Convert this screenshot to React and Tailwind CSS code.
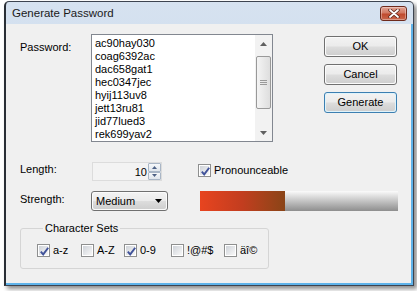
import React from 'react';

const passwords = [
  'ac90hay030',
  'coag6392ac',
  'dac658gat1',
  'hec0347jec',
  'hyij113uv8',
  'jett13ru81',
  'jid77lued3',
  'rek699yav2',
];

const charSets = [
  { label: 'a-z', checked: true, w: 'w-[44px]' },
  { label: 'A-Z', checked: false, w: 'w-[43px]' },
  { label: '0-9', checked: true, w: 'w-[47px]' },
  { label: '!@#$', checked: false, w: 'w-[53px]' },
  { label: 'äî©', checked: false, w: 'w-[40px]' },
];

const Check = ({ checked }) => (
  <span className="w-[13px] h-[13px] shrink-0 border border-[#8e8f8f] bg-white p-px">
    <span className="block w-full h-full bg-linear-to-br from-[#cfd3d9] to-[#f8f8f8] relative">
      {checked && (
        <svg width="11" height="11" viewBox="0 0 11 11" className="absolute left-0 top-0">
          <path d="M1.8 5.6 L4.2 8.4 L9.2 1.8" fill="none" stroke="#41539a" strokeWidth="1.9" />
        </svg>
      )}
    </span>
  </span>
);

const Button = ({ children, focused }) => (
  <button
    className={
      focused
        ? 'w-[73px] h-[21px] rounded-[3px] border border-[#3c7fb1] p-px bg-[#dff3fb]'
        : 'w-[73px] h-[21px] rounded-[3px] border border-[#707070] p-px bg-white/70'
    }
  >
    <span className="flex items-center justify-center w-full h-full rounded-[2px] bg-[linear-gradient(to_bottom,#f2f2f2_0%,#ebebeb_48%,#dddddd_52%,#cfcfcf_100%)] text-[11px] leading-[13px] text-black">
      {children}
    </span>
  </button>
);

const Arrow = ({ down, color = '#606060' }) => (
  <svg width="7" height="4" viewBox="0 0 7 4">
    <path d={down ? 'M0 0 H7 L3.5 4 Z' : 'M0 4 H7 L3.5 0 Z'} fill={color} />
  </svg>
);

export default function App() {
  return (
    <div className="w-[417px] h-[291px] bg-white overflow-hidden font-['Liberation_Sans',Arial,sans-serif] text-black">
      <div className="ml-[4px] mt-[1px] w-[410px] h-[285px] flex flex-col rounded-t-[5px] border border-[#3d4450] border-l-2 border-l-[#2a2f36] bg-linear-to-b from-[#d6e2f0] to-[#bfd2e9] shadow-[3px_3px_4px_rgba(0,0,0,0.45)]">
        {/* title bar */}
        <div className="h-[22px] shrink-0 flex items-center justify-between pl-[6px] pr-[6px]">
          <span className="text-[11.5px] leading-[14px] text-[#1a1a1a]">Generate Password</span>
          <div className="w-[27px] h-[15px] rounded-[3px] border border-[#6e2a1c] bg-[linear-gradient(to_bottom,#e2a392_0%,#d27a64_45%,#c04a2e_55%,#c9674c_100%)] flex items-center justify-center shadow-[inset_0_0_0_1px_rgba(255,255,255,0.35)]">
            <svg width="12" height="9" viewBox="0 0 12 9">
              <path d="M2 1 L10 8 M10 1 L2 8" stroke="#5a2418" strokeWidth="3.4" strokeLinecap="round" />
              <path d="M2 1 L10 8 M10 1 L2 8" stroke="#ffffff" strokeWidth="1.8" strokeLinecap="round" />
            </svg>
          </div>
        </div>

        {/* dialog body */}
        <div className="flex-1 bg-[#f0f0f0] border-r-2 border-b-2 border-[#5fb3ea] pt-[10px] pl-[14px] text-[11px] leading-[13px]">
          {/* password list + buttons */}
          <div className="flex items-start">
            <div className="w-[71px] pt-[7px]">Password:</div>
            <div className="w-[182px] h-[108px] border border-[#828790] bg-white flex">
              <div className="flex-1 pl-[3px] pt-[2px]">
                {passwords.map((p) => (
                  <div key={p} className="h-[13px]">{p}</div>
                ))}
              </div>
              <div className="w-[17px] bg-[#f2f2f2] flex flex-col">
                <div className="h-[17px] flex items-center justify-center">
                  <Arrow />
                </div>
                <div className="flex-1">
                  <div className="mt-[4px] mx-px h-[53px] rounded-[2px] border border-[#999] bg-linear-to-r from-[#f4f4f4] to-[#dedede] flex flex-col items-center justify-center gap-[1px]">
                    <span className="w-[7px] h-px bg-[#9a9a9a]" />
                    <span className="w-[7px] h-px bg-[#9a9a9a]" />
                    <span className="w-[7px] h-px bg-[#9a9a9a]" />
                  </div>
                </div>
                <div className="h-[17px] flex items-center justify-center">
                  <Arrow down />
                </div>
              </div>
            </div>
            <div className="ml-[51px] mt-[2px] flex flex-col gap-[7px]">
              <Button>OK</Button>
              <Button>Cancel</Button>
              <Button focused>Generate</Button>
            </div>
          </div>

          {/* length row */}
          <div className="flex items-start mt-[20px]">
            <div className="w-[72px] pt-[1px]">Length:</div>
            <div className="w-[70px] h-[19px] border border-[#dcdcdc] bg-[#f3f3f3] flex">
              <div className="flex-1 text-right pr-[1px] pt-[3px]">10</div>
              <div className="w-[13px] flex flex-col">
                <div className="h-[9px] border border-[#a9b6c6] rounded-[1px] bg-linear-to-b from-[#f6f8fa] to-[#dfe5ec] flex items-center justify-center">
                  <svg width="5" height="3" viewBox="0 0 5 3"><path d="M0 3 H5 L2.5 0 Z" fill="#4d6185" /></svg>
                </div>
                <div className="h-[9px] border border-[#a9b6c6] rounded-[1px] bg-linear-to-b from-[#f6f8fa] to-[#dfe5ec] flex items-center justify-center">
                  <svg width="5" height="3" viewBox="0 0 5 3"><path d="M0 0 H5 L2.5 3 Z" fill="#4d6185" /></svg>
                </div>
              </div>
            </div>
            <div className="ml-[36px] mt-[2px] flex items-center gap-[3px]">
              <Check checked />
              <span>Pronounceable</span>
            </div>
          </div>

          {/* strength row */}
          <div className="flex items-start mt-[10px]">
            <div className="w-[71px] pt-[2px]">Strength:</div>
            <div className="w-[77px] h-[20px] rounded-[3px] border border-[#707070] p-px bg-white/70">
              <div className="w-full h-full rounded-[2px] bg-[linear-gradient(to_bottom,#f2f2f2_0%,#ebebeb_48%,#dddddd_52%,#cfcfcf_100%)] flex items-center justify-between pl-[3px] pr-[4px]">
                <span>Medium</span>
                <Arrow down color="#000" />
              </div>
            </div>
            <div className="ml-[32px] w-[198px] h-[20px] flex">
              <div className="w-[85px] h-full bg-linear-to-r from-[#e8441f] via-[#c23d1f] to-[#8a4417]" />
              <div className="flex-1 h-full bg-linear-to-b from-[#fbfbfb] via-[#c4c4c4] to-[#8e8e8e]" />
            </div>
          </div>

          {/* character sets */}
          <fieldset className="mt-[11px] w-[249px] border border-[#d5d5d5] rounded-[3px] pl-[16px] pb-[11px]">
            <legend className="ml-[6px] px-[2px] leading-[13px]">Character Sets</legend>
            <div className="flex mt-[9px]">
              {charSets.map((c) => (
                <div key={c.label} className={`${c.w} flex items-center gap-[3px]`}>
                  <Check checked={c.checked} />
                  <span>{c.label}</span>
                </div>
              ))}
            </div>
          </fieldset>
        </div>
      </div>
    </div>
  );
}
